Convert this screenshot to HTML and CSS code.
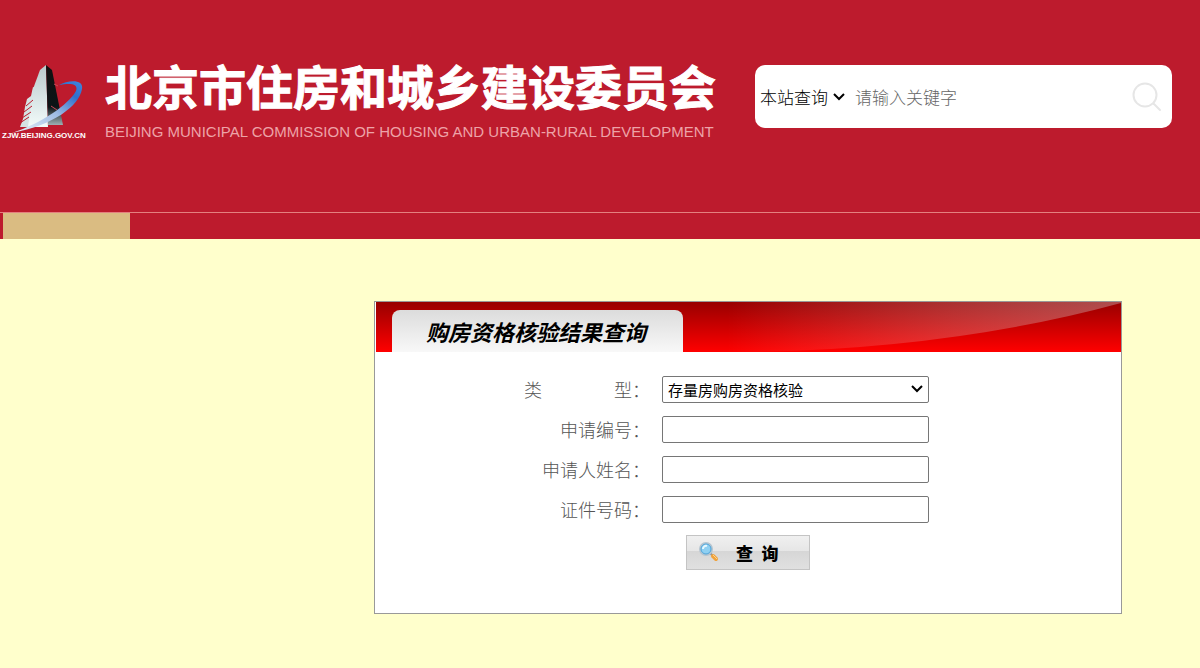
FILE: index.html
```html
<!DOCTYPE html>
<html lang="zh-CN">
<head>
    <meta charset="UTF-8">
    <meta name="viewport" content="width=device-width, initial-scale=1.0">
    <title>购房资格核验结果查询</title>
    <link rel="stylesheet" href="styles.css">
</head>
<body>
    <header class="header">
        <a class="brand" href="#">
            <svg class="logo" viewBox="0 0 90 76" role="img" aria-label="ZJW.BEIJING.GOV.CN">
                <defs>
                    <linearGradient id="glass" x1="0" y1="0" x2="0" y2="1">
                        <stop offset="0" stop-color="#b9c9cb"/>
                        <stop offset="1" stop-color="#f2fbfa"/>
                    </linearGradient>
                    <linearGradient id="dark" x1="0" y1="0" x2="0" y2="1">
                        <stop offset="0" stop-color="#111"/>
                        <stop offset="0.7" stop-color="#0c1416"/>
                        <stop offset="1" stop-color="#9db0b3"/>
                    </linearGradient>
                    <linearGradient id="ring" x1="0" y1="1" x2="1" y2="0">
                        <stop offset="0" stop-color="#eef4fb"/>
                        <stop offset="0.5" stop-color="#9fbde3"/>
                        <stop offset="0.8" stop-color="#2f6fcb"/>
                        <stop offset="1" stop-color="#3f86de"/>
                    </linearGradient>
                </defs>
                <path d="M31 24 36 26 37 64H18l3-8 2-12 2-8 4-3z" fill="#d5e2e3"/>
                <path d="M38 7 44 2 46 64H26l5-38z" fill="url(#glass)"/>
                <path d="M44 2 50 7 61 62H46z" fill="url(#dark)"/>
                <path d="M24 43l7-6M22 49l8-6M20 55l9-6M18 60l9-6" stroke="#bd1b2d" stroke-width="1" fill="none"/>
                <path d="M52 21l4 2M49 43l6 4" stroke="#c94a57" stroke-width="1"/>
                <path d="M57 22C66 17 82 16 80 26 77 43 52 62 10 70 40 60 66 42 74 28 77 20 67 20 57 22z" fill="url(#ring)"/>
                <text class="logo-text" x="0" y="75">ZJW.BEIJING.GOV.CN</text>
            </svg>
            <span class="brand-names">
                <span class="brand-cn">北京市住房和城乡建设委员会</span>
                <span class="brand-en">BEIJING MUNICIPAL COMMISSION OF HOUSING AND URBAN-RURAL DEVELOPMENT</span>
            </span>
        </a>
        <form class="search">
            <select class="search-type" aria-label="查询范围">
                <option>本站查询</option>
            </select>
            <input class="search-text" type="text" placeholder="请输入关键字" aria-label="请输入关键字">
            <button class="search-btn" type="submit" aria-label="搜索">
                <svg width="30" height="30" viewBox="0 0 30 30" fill="none" stroke="#e6e6e6" stroke-width="2" stroke-linecap="round">
                    <circle cx="13" cy="13" r="11.5"/>
                    <path d="M21.500 21.500 28 28"/>
                </svg>
            </button>
        </form>
    </header>
    <nav class="nav">
        <a class="nav-item" href="#" aria-label="首页"></a>
    </nav>

    <main class="panel">
        <div class="banner">
            <svg class="banner-shine" viewBox="0 0 745 50" preserveAspectRatio="none" aria-hidden="true">
                <defs>
                    <linearGradient id="shine" x1="0" y1="0" x2="1" y2="0">
                        <stop offset="0.1" stop-color="#fff" stop-opacity="0"/>
                        <stop offset="1" stop-color="#ccc" stop-opacity="0.38"/>
                    </linearGradient>
                </defs>
                <path d="M307 0H745V1Q580 46 380 50H307z" fill="url(#shine)"/>
            </svg>
            <h1 class="banner-title">购房资格核验结果查询</h1>
        </div>
        <form class="query">
            <label for="type">类　　　　型：</label>
            <select id="type" class="field">
                <option>存量房购房资格核验</option>
            </select>

            <label for="applyNo">申请编号：</label>
            <input id="applyNo" class="field" type="text">

            <label for="applyName">申请人姓名：</label>
            <input id="applyName" class="field" type="text">

            <label for="cardNo">证件号码：</label>
            <input id="cardNo" class="field" type="text">

            <button class="query-btn" type="submit">
                <svg width="22" height="22" viewBox="0 0 22 22" fill="none">
                    <path d="M12 12l3 3" stroke="#8a8f96" stroke-width="2"/>
                    <path d="M15 15l3 3" stroke="#f0a23c" stroke-width="4" stroke-linecap="round"/>
                    <path d="M15 14l4 4" stroke="#ffd48a" stroke-width="1"/>
                    <circle cx="8" cy="8" r="6" fill="#8fd0f2" stroke="#b4c4d0" stroke-width="2"/>
                    <circle cx="8" cy="8" r="5" stroke="#4fa6dc" stroke-width="1"/>
                    <path d="M5 8a3 3 0 0 1 4-3" stroke="#e6f8ff" stroke-width="2"/>
                </svg>
                <span>查&ensp;询</span>
            </button>
        </form>
    </main>
</body>
</html>
```
FILE: styles.css
```css
* {
    box-sizing: border-box;
}

body {
    margin: 0;
    background-color: #ffffcc;
    font-family: "Noto Sans CJK SC", sans-serif;
}

.header {
    display: flex;
    align-items: flex-start;
    justify-content: space-between;
    padding: 63px 28px 72px 2px;
    background-color: #bd1b2d;
}

.brand {
    display: flex;
    gap: 13px;
    color: #fff;
    text-decoration: none;
    white-space: nowrap;
}

.logo {
    width: 90px;
    height: 76px;
    overflow: visible;
}

.logo-text {
    font: bold 8px "Liberation Sans", Arial, sans-serif;
    fill: #fff;
}

.brand-names {
    display: flex;
    flex-direction: column;
}

.brand-cn {
    font-size: 47px;
    font-weight: bold;
    line-height: 44px;
    -webkit-text-stroke: 1px #fff;
}

.brand-en {
    margin-top: 16px;
    color: #eda3a8;
    font: 15px/17px "Liberation Sans", Arial, sans-serif;
}

.search {
    display: flex;
    align-items: center;
    width: 417px;
    height: 63px;
    margin-top: 2px;
    padding: 0 10px 0 5px;
    border-radius: 10px;
    background-color: #fff;
}

select {
    appearance: none;
    background: url("data:image/svg+xml,%3Csvg xmlns='http://www.w3.org/2000/svg' width='12' height='8' fill='none' stroke='%23000' stroke-width='2'%3E%3Cpath d='M1 1l5 5 5-5'/%3E%3C/svg%3E") no-repeat right 5px center;
}

.search-type,
.search-text,
.search-btn {
    border: none;
    font-family: inherit;
    font-weight: 300;
}

.search-type {
    width: 90px;
    padding: 0;
    color: #000;
    font-size: 17px;
}

.search-text {
    flex: 1;
    min-width: 0;
    padding: 0 5px;
    background: none;
    font-size: 17px;
}

.search-text::placeholder {
    color: #666;
}

.search-btn {
    display: flex;
    padding: 0;
    background: none;
    cursor: pointer;
}

.nav {
    display: flex;
    height: 27px;
    padding-left: 3px;
    border-top: 1px solid #e4817f;
    background-color: #bd1b2d;
}

.nav-item {
    width: 127px;
    background-color: #dabc82;
}

.panel {
    max-width: 748px;
    margin: 62px 78px 54px 374px;
    padding-left: 1px;
    border: 1px solid #999;
    background-color: #fff;
}

.banner {
    position: relative;
    padding: 8px 16px 0;
    background: linear-gradient(#980000, #ff0000);
}

.banner-shine {
    position: absolute;
    top: 0;
    left: 0;
    width: 100%;
    height: 100%;
}

.banner-title {
    position: relative;
    width: 291px;
    margin: 0;
    padding-left: 34px;
    border-radius: 8px 8px 0 0;
    background: linear-gradient(#dcdcdc, #f8f8f8);
    font-size: 22px;
    font-style: italic;
    line-height: 42px;
}

.query {
    display: grid;
    grid-template-columns: 274px 267px;
    column-gap: 12px;
    grid-auto-rows: 40px;
    align-items: center;
    padding: 17px 0 44px;
}

.query label {
    color: #555;
    font-size: 18px;
    font-weight: 300;
    text-align: right;
}

.field {
    width: 100%;
    height: 27px;
    padding: 0 5px;
    border: 1px solid #767676;
    border-radius: 2px;
    color: #000;
    font-family: inherit;
    font-size: 15px;
}

.query-btn {
    grid-column: 2;
    display: flex;
    align-items: center;
    width: 124px;
    height: 35px;
    margin: 6px 0 0 24px;
    padding: 0 11px;
    gap: 16px;
    border: 1px solid #c4c4c4;
    background: linear-gradient(#f0f0f0, #e6e6e6 45%, #d6d6d6 45%, #e0e0e0);
    color: #000;
    font-family: inherit;
    font-size: 17px;
    font-weight: 900;
    cursor: pointer;
}
```
